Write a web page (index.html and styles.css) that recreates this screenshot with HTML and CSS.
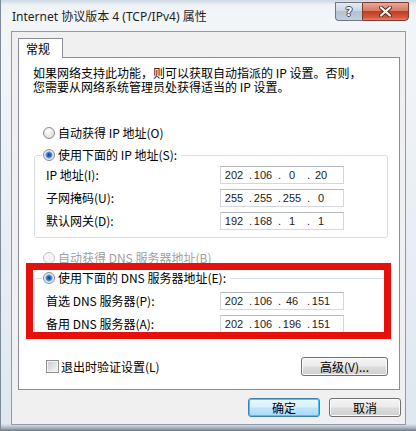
FILE: index.html
```html
<!DOCTYPE html>
<html lang="zh-CN">
<head>
  <meta charset="UTF-8" />
  <title>Internet 协议版本 4 (TCP/IPv4) 属性</title>
  <link rel="stylesheet" href="styles.css">
</head>
<body>
  <div class="frame">
    <div class="titlebar">
      <div class="title">Internet 协议版本 4 (TCP/IPv4) 属性</div>
      <div class="caption-btns">
        <span class="cap help">?</span>
        <span class="cap close">
          <svg width="13" height="11" viewBox="0 0 13 11">
            <path d="M2 1.5 L11 9.5 M11 1.5 L2 9.5" stroke="#5a2418" stroke-width="4" stroke-linecap="round" />
            <path d="M2 1.5 L11 9.5 M11 1.5 L2 9.5" stroke="#fff" stroke-width="2.2" stroke-linecap="round" />
          </svg>
        </span>
      </div>
    </div>

    <div class="client">
      <div class="tabs"><div class="tab">常规</div></div>
      <div class="panel">
        <div class="desc">
          <div>如果网络支持此功能，则可以获取自动指派的 IP 设置。否则，</div>
          <div>您需要从网络系统管理员处获得适当的 IP 设置。</div>
        </div>

        <div class="radio-row ip-auto"><span class="radio"></span>自动获得 IP 地址(O)</div>
        <fieldset class="group ip">
          <legend><span class="radio checked"></span>使用下面的 IP 地址(S):</legend>
          <div class="field-row">
            <span class="label">IP 地址(I):</span>
            <span class="ipbox"><span class="oct">202</span><span class="dot">.</span><span class="oct">106</span><span class="dot">.</span><span class="oct">0</span><span class="dot">.</span><span class="oct">20</span></span>
          </div>
          <div class="field-row">
            <span class="label">子网掩码(U):</span>
            <span class="ipbox"><span class="oct">255</span><span class="dot">.</span><span class="oct">255</span><span class="dot">.</span><span class="oct">255</span><span class="dot">.</span><span class="oct">0</span></span>
          </div>
          <div class="field-row">
            <span class="label">默认网关(D):</span>
            <span class="ipbox"><span class="oct">192</span><span class="dot">.</span><span class="oct">168</span><span class="dot">.</span><span class="oct">1</span><span class="dot">.</span><span class="oct">1</span></span>
          </div>
        </fieldset>

        <div class="radio-row dns-auto disabled"><span class="radio"></span>自动获得 DNS 服务器地址(B)</div>
        <fieldset class="group dns">
          <legend><span class="radio checked"></span>使用下面的 DNS 服务器地址(E):</legend>
          <div class="field-row">
            <span class="label">首选 DNS 服务器(P):</span>
            <span class="ipbox"><span class="oct">202</span><span class="dot">.</span><span class="oct">106</span><span class="dot">.</span><span class="oct">46</span><span class="dot">.</span><span class="oct">151</span></span>
          </div>
          <div class="field-row">
            <span class="label">备用 DNS 服务器(A):</span>
            <span class="ipbox"><span class="oct">202</span><span class="dot">.</span><span class="oct">106</span><span class="dot">.</span><span class="oct">196</span><span class="dot">.</span><span class="oct">151</span></span>
          </div>
        </fieldset>

        <div class="bottom-row">
          <div class="check-row"><span class="checkbox"></span>退出时验证设置(L)</div>
          <button class="btn adv">高级(V)...</button>
        </div>

        <div class="highlight"></div>
      </div>

      <div class="actions">
        <button class="btn default">确定</button>
        <button class="btn">取消</button>
      </div>
    </div>
  </div>
</body>
</html>
```

FILE: styles.css
```css
html, body {
  margin: 0;
  padding: 0;
}

body {
  width: 416px;
  height: 431px;
  overflow: hidden;
  font-family: "Noto Sans CJK SC", sans-serif;
  font-size: 12px;
  line-height: 16px;
  color: #000;
}

.frame {
  height: 431px;
  box-sizing: border-box;
  display: flex;
  flex-direction: column;
  padding: 0 10px 6px 10px;
  border-left: 1px solid #7d8a97;
  background:
    linear-gradient(180deg, rgba(255,255,255,0) 0, rgba(255,255,255,0) 424px, #a9b3bd 428px, #6e7884 431px),
    linear-gradient(180deg, #cdd8e3 0, #eef2f6 5px, #f3f6f9 20px, #e7edf3 60%, #dfe6ed 100%);
}

/* title bar */
.titlebar {
  height: 31px;
  display: flex;
  align-items: flex-start;
  margin-right: -3px;
  margin-left: 1px;
}

.title {
  margin-top: 9px;
  font-family: "Noto Sans", "Noto Sans CJK SC", sans-serif;
  font-size: 12px;
  line-height: 16px;
  color: #1e1e1e;
}

.caption-btns {
  margin-left: auto;
  margin-top: 2px;
  display: flex;
}

.cap {
  height: 19px;
  box-sizing: border-box;
  display: flex;
  align-items: center;
  justify-content: center;
  border: 1px solid #6c7886;
}

.help {
  width: 27px;
  border-right: none;
  border-radius: 0 0 0 4px;
  background: linear-gradient(180deg, #e4eaf1 0, #ccd6e1 45%, #b3c1d0 50%, #c2cfdc 100%);
  color: #fff;
  font-family: "DejaVu Sans", sans-serif;
  font-weight: bold;
  font-size: 12px;
  text-shadow: 1px 0 0 #3b4756, -1px 0 0 #3b4756, 0 1px 0 #3b4756, 0 -1px 0 #3b4756;
}

.close {
  width: 47px;
  border-radius: 0 0 4px 0;
  border-color: #7a3b33;
  background: linear-gradient(180deg, #e9a898 0, #d77a66 45%, #c43c22 50%, #d45a40 85%, #e28a6e 100%);
}

/* client area */
.client {
  flex: 1;
  background: #f0f0f0;
  border: 1px solid #8d9bac;
  padding: 6px 5px 0 6px;
}

.tabs {
  display: flex;
}

.tab {
  position: relative;
  z-index: 1;
  height: 19px;
  margin-bottom: -1px;
  padding: 0 12px 0 7px;
  background: #fff;
  border: 1px solid #898c95;
  border-bottom: none;
  line-height: 20px;
}

.panel {
  position: relative;
  height: 333px;
  box-sizing: border-box;
  background: #fff;
  border: 1px solid #898c95;
  padding: 8px 11px 12px 15px;
}

.desc {
  margin-left: -1px;
  line-height: 14px;
  white-space: nowrap;
}

.radio-row {
  display: flex;
  align-items: center;
  gap: 3px;
  height: 16px;
  padding-left: 9px;
}

.ip-auto {
  margin-top: 31px;
}

.dns-auto {
  margin-top: 12px;
}

.disabled {
  color: #a0a0a0;
}

.radio {
  width: 12px;
  height: 12px;
  box-sizing: border-box;
  border-radius: 50%;
  border: 1px solid #8a8c8e;
  background: radial-gradient(circle at 40% 35%, #ffffff 0, #eeeeee 40%, #d2d2d2 100%);
  flex: none;
}

.radio.checked {
  background: radial-gradient(circle, #0d3f86 0, #2c6cbf 2px, #74aee6 3.2px, #e8eef5 4px, #d8d8d8 100%);
}

.disabled .radio {
  border-color: #c4c6c8;
  background: #f4f4f4;
}

/* group boxes */
.group {
  margin: 6px 0 0 0;
  padding: 3px 0 7px 7px;
  border: 1px solid #d5dfe5;
  border-radius: 3px;
}

.group legend {
  display: flex;
  align-items: center;
  gap: 3px;
  padding: 0 4px 0 1px;
  height: 16px;
}

.group.dns {
  margin-top: 4px;
  padding-top: 6px;
  padding-bottom: 5px;
}

.field-row {
  display: flex;
  align-items: center;
  height: 18px;
  margin-left: 4px;
}

.field-row + .field-row {
  margin-top: 5px;
}

.label {
  width: 174px;
  flex: none;
}

.ipbox {
  display: flex;
  align-items: center;
  width: 124px;
  height: 18px;
  box-sizing: border-box;
  padding-left: 2px;
  border: 1px solid #d4d7dc;
  border-top-color: #b5b9c0;
  font-family: "Liberation Sans", sans-serif;
  font-size: 11px;
  color: #222;
}

.oct {
  width: 22px;
  text-align: center;
}

.dot {
  width: 7px;
  text-align: right;
}

/* bottom controls */
.bottom-row {
  display: flex;
  align-items: center;
  justify-content: space-between;
  margin-top: 18px;
  height: 19px;
}

.check-row {
  display: flex;
  align-items: center;
  gap: 2px;
  padding-left: 12px;
}

.checkbox {
  width: 13px;
  height: 13px;
  box-sizing: border-box;
  border: 1px solid #8e8f8f;
  background: linear-gradient(135deg, #c9c9c9 0, #e4e4e4 55%, #f7f7f7 100%);
  box-shadow: inset 0 0 0 1px #f4f4f4;
}

.btn {
  height: 19px;
  padding: 0;
  font: inherit;
  font-size: 12px;
  line-height: 16px;
  color: #000;
  border: 1px solid #707070;
  border-radius: 3px;
  background: linear-gradient(180deg, #f4f4f4 0, #ebebeb 48%, #dddddd 52%, #cfcfcf 100%);
  box-shadow: inset 0 0 0 1px #fbfbfb;
}

.adv {
  width: 87px;
}

.actions {
  display: flex;
  justify-content: flex-end;
  gap: 9px;
  margin-top: 8px;
  margin-right: -1px;
}

.actions .btn {
  width: 72px;
}

.btn.default {
  border-color: #3c7fb1;
  background: linear-gradient(180deg, #eaf6fd 0, #d9f0fc 48%, #bee6fd 52%, #a7d9f5 100%);
  box-shadow: inset 0 0 0 1px #48c6f5;
}

/* red annotation rectangle drawn over the DNS group */
.highlight {
  position: absolute;
  left: 7px;
  top: 205px;
  width: 365px;
  height: 76px;
  box-sizing: border-box;
  border: 7px solid #e8100a;
}
```
